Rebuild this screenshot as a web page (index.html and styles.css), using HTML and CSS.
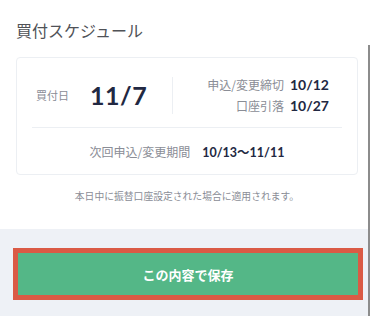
FILE: index.html
```html
<!DOCTYPE html>
<html lang="ja">
<head>
<meta charset="utf-8">
<link rel="stylesheet" href="styles.css">
</head>
<body>
<div class="page">
  <div class="content">
    <div class="top">
      <h2 class="title">買付スケジュール</h2>
      <div class="card">
        <div class="card-top">
          <div class="buy">
            <span class="label">買付日</span>
            <span class="big">11/7</span>
          </div>
          <div class="vline"></div>
          <div class="dates">
            <div class="drow"><span class="label12">申込/変更締切</span><span class="val">10/12</span></div>
            <div class="drow"><span class="label12">口座引落</span><span class="val">10/27</span></div>
          </div>
        </div>
        <div class="card-bottom">
          <span class="label12">次回申込/変更期間</span>
          <span class="val small">10/13〜11/11</span>
        </div>
      </div>
      <p class="note">本日中に振替口座設定された場合に適用されます。</p>
    </div>
    <div class="footer">
      <button class="save">この内容で保存</button>
    </div>
  </div>
  <div class="scrollbar"></div>
  <div class="gutter"></div>
</div>
</body>
</html>
```

FILE: styles.css
```css
* { box-sizing: border-box; }
html, body { margin: 0; padding: 0; background: #fff; }
body {
  font-family: "Lato", "Noto Sans CJK JP", sans-serif;
  width: 375px;
  height: 316px;
  overflow: hidden;
}
.page { display: flex; height: 316px; }
.content { width: 368px; display: flex; flex-direction: column; }
.scrollbar { width: 2px; margin-top: 45px; background: #8c8c8c; }
.gutter { flex: 1; background: #fff; }

.top { padding: 18px 10px 0 16px; height: 229px; }
.title {
  margin: 0;
  font-family: "Noto Sans CJK JP", sans-serif;
  font-size: 16px;
  line-height: 24px;
  font-weight: 400;
  color: #505257;
}
.card {
  margin-top: 15px;
  border: 1px solid #eceff3;
  border-radius: 4px;
  height: 118px;
  padding: 0 15px;
}
.card-top {
  display: grid;
  grid-template-columns: 140px 1px 1fr;
  align-items: center;
  height: 70px;
  padding-top: 17px;
  padding-bottom: 15px;
  border-bottom: 1px solid #eceff3;
}
.buy { display: flex; align-items: center; padding-left: 4px; gap: 21px; }
.label { font-family: "Noto Sans CJK JP", sans-serif; font-size: 11px; color: #8a8d96; }
.big { font-size: 25px; font-weight: 700; color: #222842; letter-spacing: 0.5px; }
.vline { width: 1px; height: 37px; background: #eceff3; }
.dates { display: flex; flex-direction: column; align-items: flex-end; padding-right: 13px; gap: 2px; }
.drow { display: flex; align-items: center; gap: 6px; height: 19px; }
.label12 { font-family: "Noto Sans CJK JP", sans-serif; font-size: 12px; color: #8a8d96; }
.val { font-size: 14px; font-weight: 700; color: #222842; }
.val.small { font-size: 12.5px; }
.card-bottom {
  display: flex;
  justify-content: center;
  align-items: center;
  gap: 12px;
  height: 46px;
}
.note {
  margin: 13px 0 0;
  text-align: center;
  font-family: "Noto Sans CJK JP", sans-serif;
  font-size: 9.8px;
  line-height: 16px;
  color: #8a8d96;
}
.footer { flex: 1; background: #eef1f6; padding: 24px 10px 0 18px; }
.save {
  display: block;
  width: 340px;
  height: 42px;
  border: none;
  background: #54b787;
  color: #fff;
  font-family: "Noto Sans CJK JP", sans-serif;
  font-size: 13px;
  font-weight: 700;
  outline: 5px solid #da5a45;
}
```
